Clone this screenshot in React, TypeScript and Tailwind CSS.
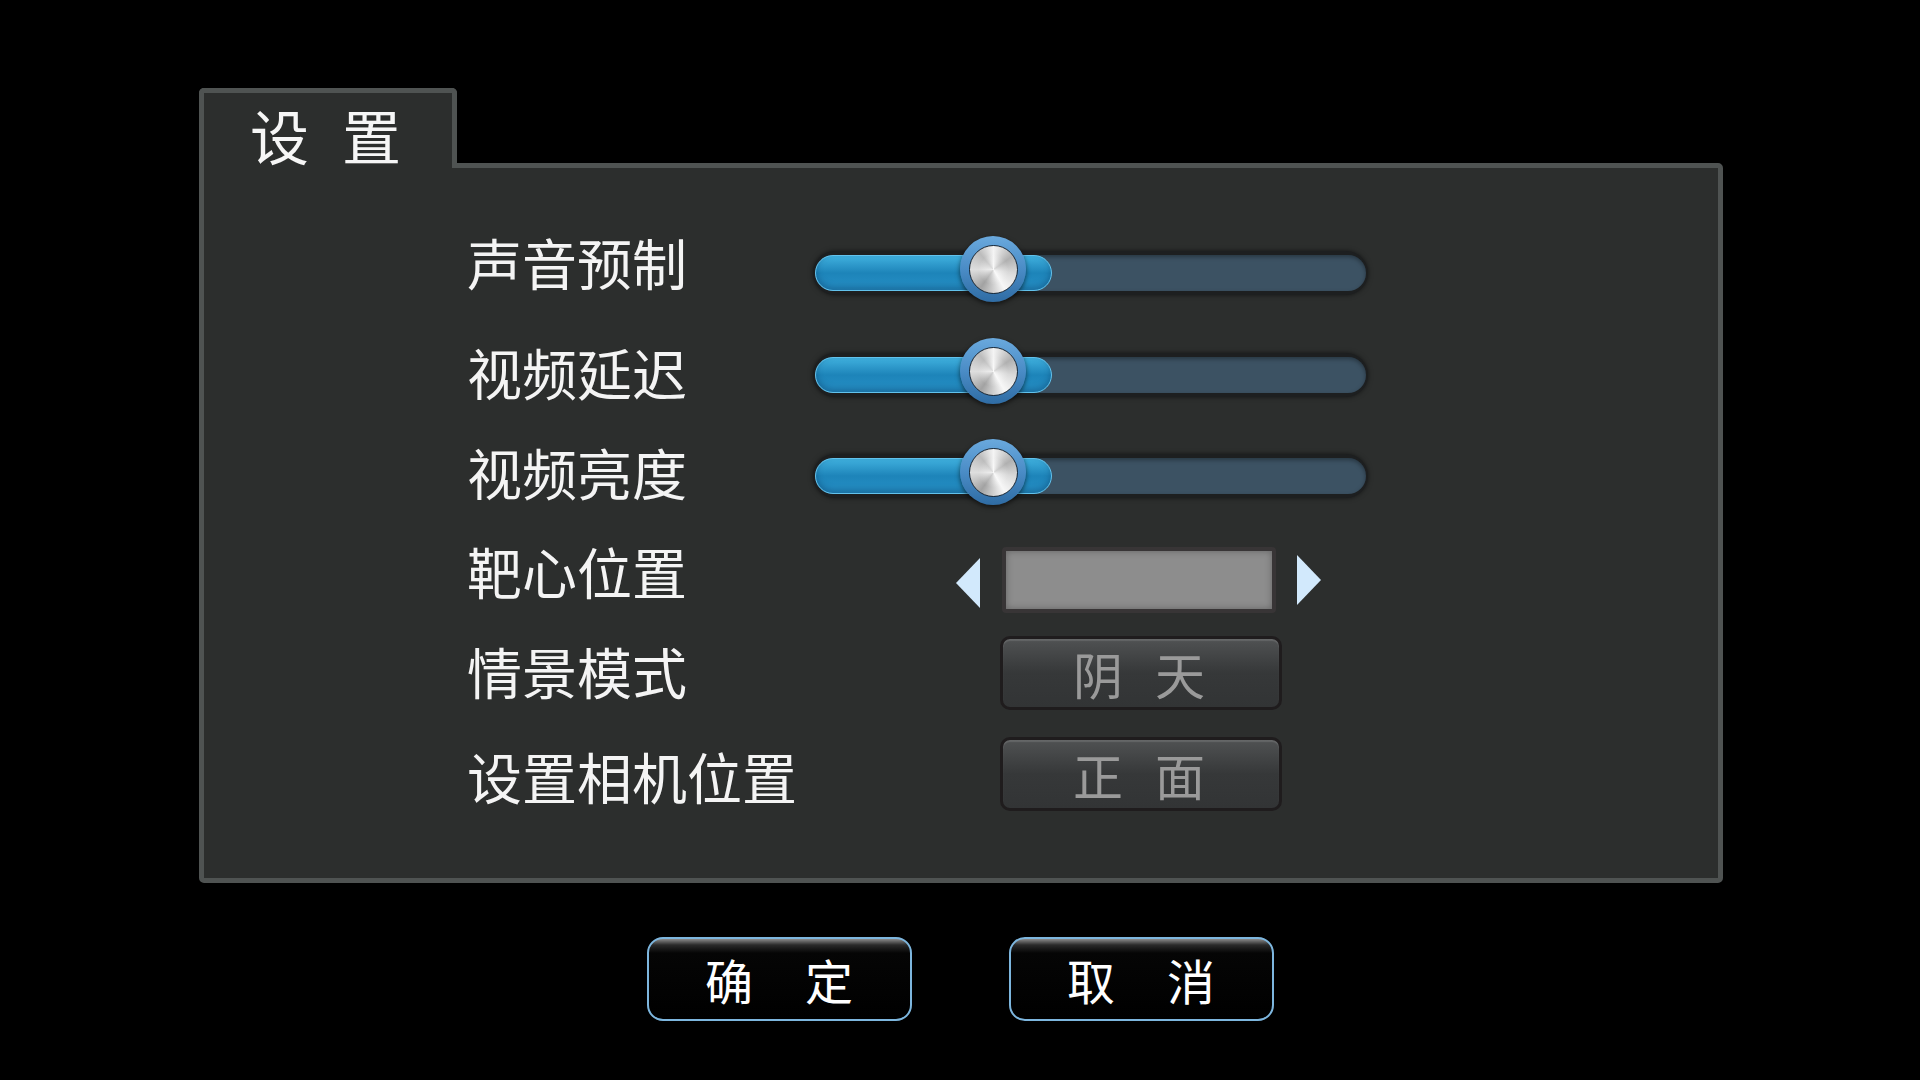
import React from 'react'

const cjk = "font-['Noto_Sans_CJK_SC','Noto_Sans',sans-serif]"

function Slider() {
  return (
    <div className="relative w-[555px] h-[44px] rounded-full bg-[#1d1f20] px-[2px] py-[4px] shadow-[0_0_5px_rgba(0,0,0,0.55)]">
      <div className="flex h-full w-full rounded-full bg-[#3c5263] shadow-[inset_0_2px_4px_rgba(0,0,0,0.35)]">
        <div className="h-full w-[237px] rounded-full border border-[#62c2ec] bg-gradient-to-b from-[#3fb0de] via-[#1d84b9] to-[#2690c6] shadow-[inset_0_-3px_6px_rgba(0,40,80,0.35)]" />
      </div>
      <div className="absolute left-[147px] top-[-15px] flex h-[66px] w-[66px] items-center justify-center rounded-full bg-gradient-to-b from-[#6aa9dd] via-[#4a8cc6] to-[#2f6ca4] shadow-[0_2px_5px_rgba(0,0,0,0.6)]">
        <div className="relative h-[49px] w-[49px] rounded-full border border-[#1b2835] bg-[conic-gradient(#f4f4f4_0deg,#b0b0b0_55deg,#d9d9d9_100deg,#f7f7f7_150deg,#a2a2a2_215deg,#dedede_270deg,#bcbcbc_320deg,#f4f4f4_360deg)]">
          <div className="absolute inset-0 rounded-full bg-[radial-gradient(circle,rgba(255,255,255,0.55)_0%,rgba(255,255,255,0)_45%)]" />
        </div>
      </div>
    </div>
  )
}

function Pair({ a, b, gap, cls }: { a: string; b: string; gap: string; cls: string }) {
  return (
    <div className={`flex items-center leading-none ${gap} ${cls}`}>
      <span>{a}</span>
      <span>{b}</span>
    </div>
  )
}

function ModeButton({ a, b }: { a: string; b: string }) {
  return (
    <div className="ml-[187px] flex h-[74px] w-[282px] items-center justify-center rounded-[10px] border-[3px] border-[#1f1c1d] bg-gradient-to-b from-[#505253] via-[#363839] to-[#323435] shadow-[inset_0_2px_1px_rgba(255,255,255,0.12)]">
      <Pair a={a} b={b} gap="gap-[32px]" cls="text-[50px] text-[#9a9a9a] -ml-[4px]" />
    </div>
  )
}

function Row({ label, labelMt, mt, children }: { label: string; labelMt: string; mt: string; children: React.ReactNode }) {
  return (
    <div className={`flex h-[80px] ${mt}`}>
      <div className={`w-[346px] self-start text-[55px] leading-none text-[#f4f4f4] ${labelMt}`}>{label}</div>
      <div className="flex items-center">{children}</div>
    </div>
  )
}

export default function App() {
  return (
    <div className={`h-[1080px] w-[1920px] overflow-hidden bg-black pt-[88px] ${cjk}`}>
      <div className="ml-[199px] w-[1524px]">
        <div className="relative z-10 -mb-[5px] h-[80px] w-[258px] rounded-t-[5px] border-[5px] border-b-0 border-[#4f5352] bg-[#2c2e2d] pl-[46px] pt-[12px]">
          <Pair a="设" b="置" gap="gap-[33px]" cls="text-[59px] text-[#f6f6f6]" />
        </div>
        <div className="h-[720px] rounded-b-[5px] rounded-tr-[5px] border-[5px] border-[#4f5352] bg-[#2c2e2d] pl-[263px] pt-[65px]">
          <Row label="声音预制" labelMt="mt-[1px]" mt="">
            <Slider />
          </Row>
          <Row label="视频延迟" labelMt="mt-[9px]" mt="mt-[22px]">
            <Slider />
          </Row>
          <Row label="视频亮度" labelMt="mt-[8px]" mt="mt-[21px]">
            <Slider />
          </Row>
          <Row label="靶心位置" labelMt="mt-[3px]" mt="mt-[24px]">
            <div className="ml-[143px] flex items-center">
              <svg width="24" height="50" viewBox="0 0 24 50" className="mt-[6px]">
                <polygon points="24,0 24,50 0,25" fill="#d2e9fc" />
              </svg>
              <div className="ml-[22px] h-[66px] w-[274px] rounded-[4px] border-[4px] border-[#383536] bg-[#8d8d8d] shadow-[inset_0_0_7px_rgba(0,0,0,0.3)]" />
              <svg width="24" height="50" viewBox="0 0 24 50" className="ml-[21px]">
                <polygon points="0,0 0,50 24,25" fill="#d2e9fc" />
              </svg>
            </div>
          </Row>
          <Row label="情景模式" labelMt="mt-[10px]" mt="mt-[13px]">
            <ModeButton a="阴" b="天" />
          </Row>
          <Row label="设置相机位置" labelMt="mt-[14px]" mt="mt-[21px]">
            <ModeButton a="正" b="面" />
          </Row>
        </div>
      </div>
      <div className="mt-[54px] flex justify-center gap-[97px]">
        {[['确', '定'], ['取', '消']].map(([a, b]) => (
          <div
            key={a}
            className="flex h-[84px] w-[265px] items-center justify-center rounded-[16px] border-2 border-[#7db6de] bg-[linear-gradient(to_bottom,#8a8a8a_0px,#2a2a2a_6px,#050505_14px,#000_100%)]"
          >
            <Pair a={a} b={b} gap="gap-[52px]" cls="text-[48px] text-white" />
          </div>
        ))}
      </div>
    </div>
  )
}
